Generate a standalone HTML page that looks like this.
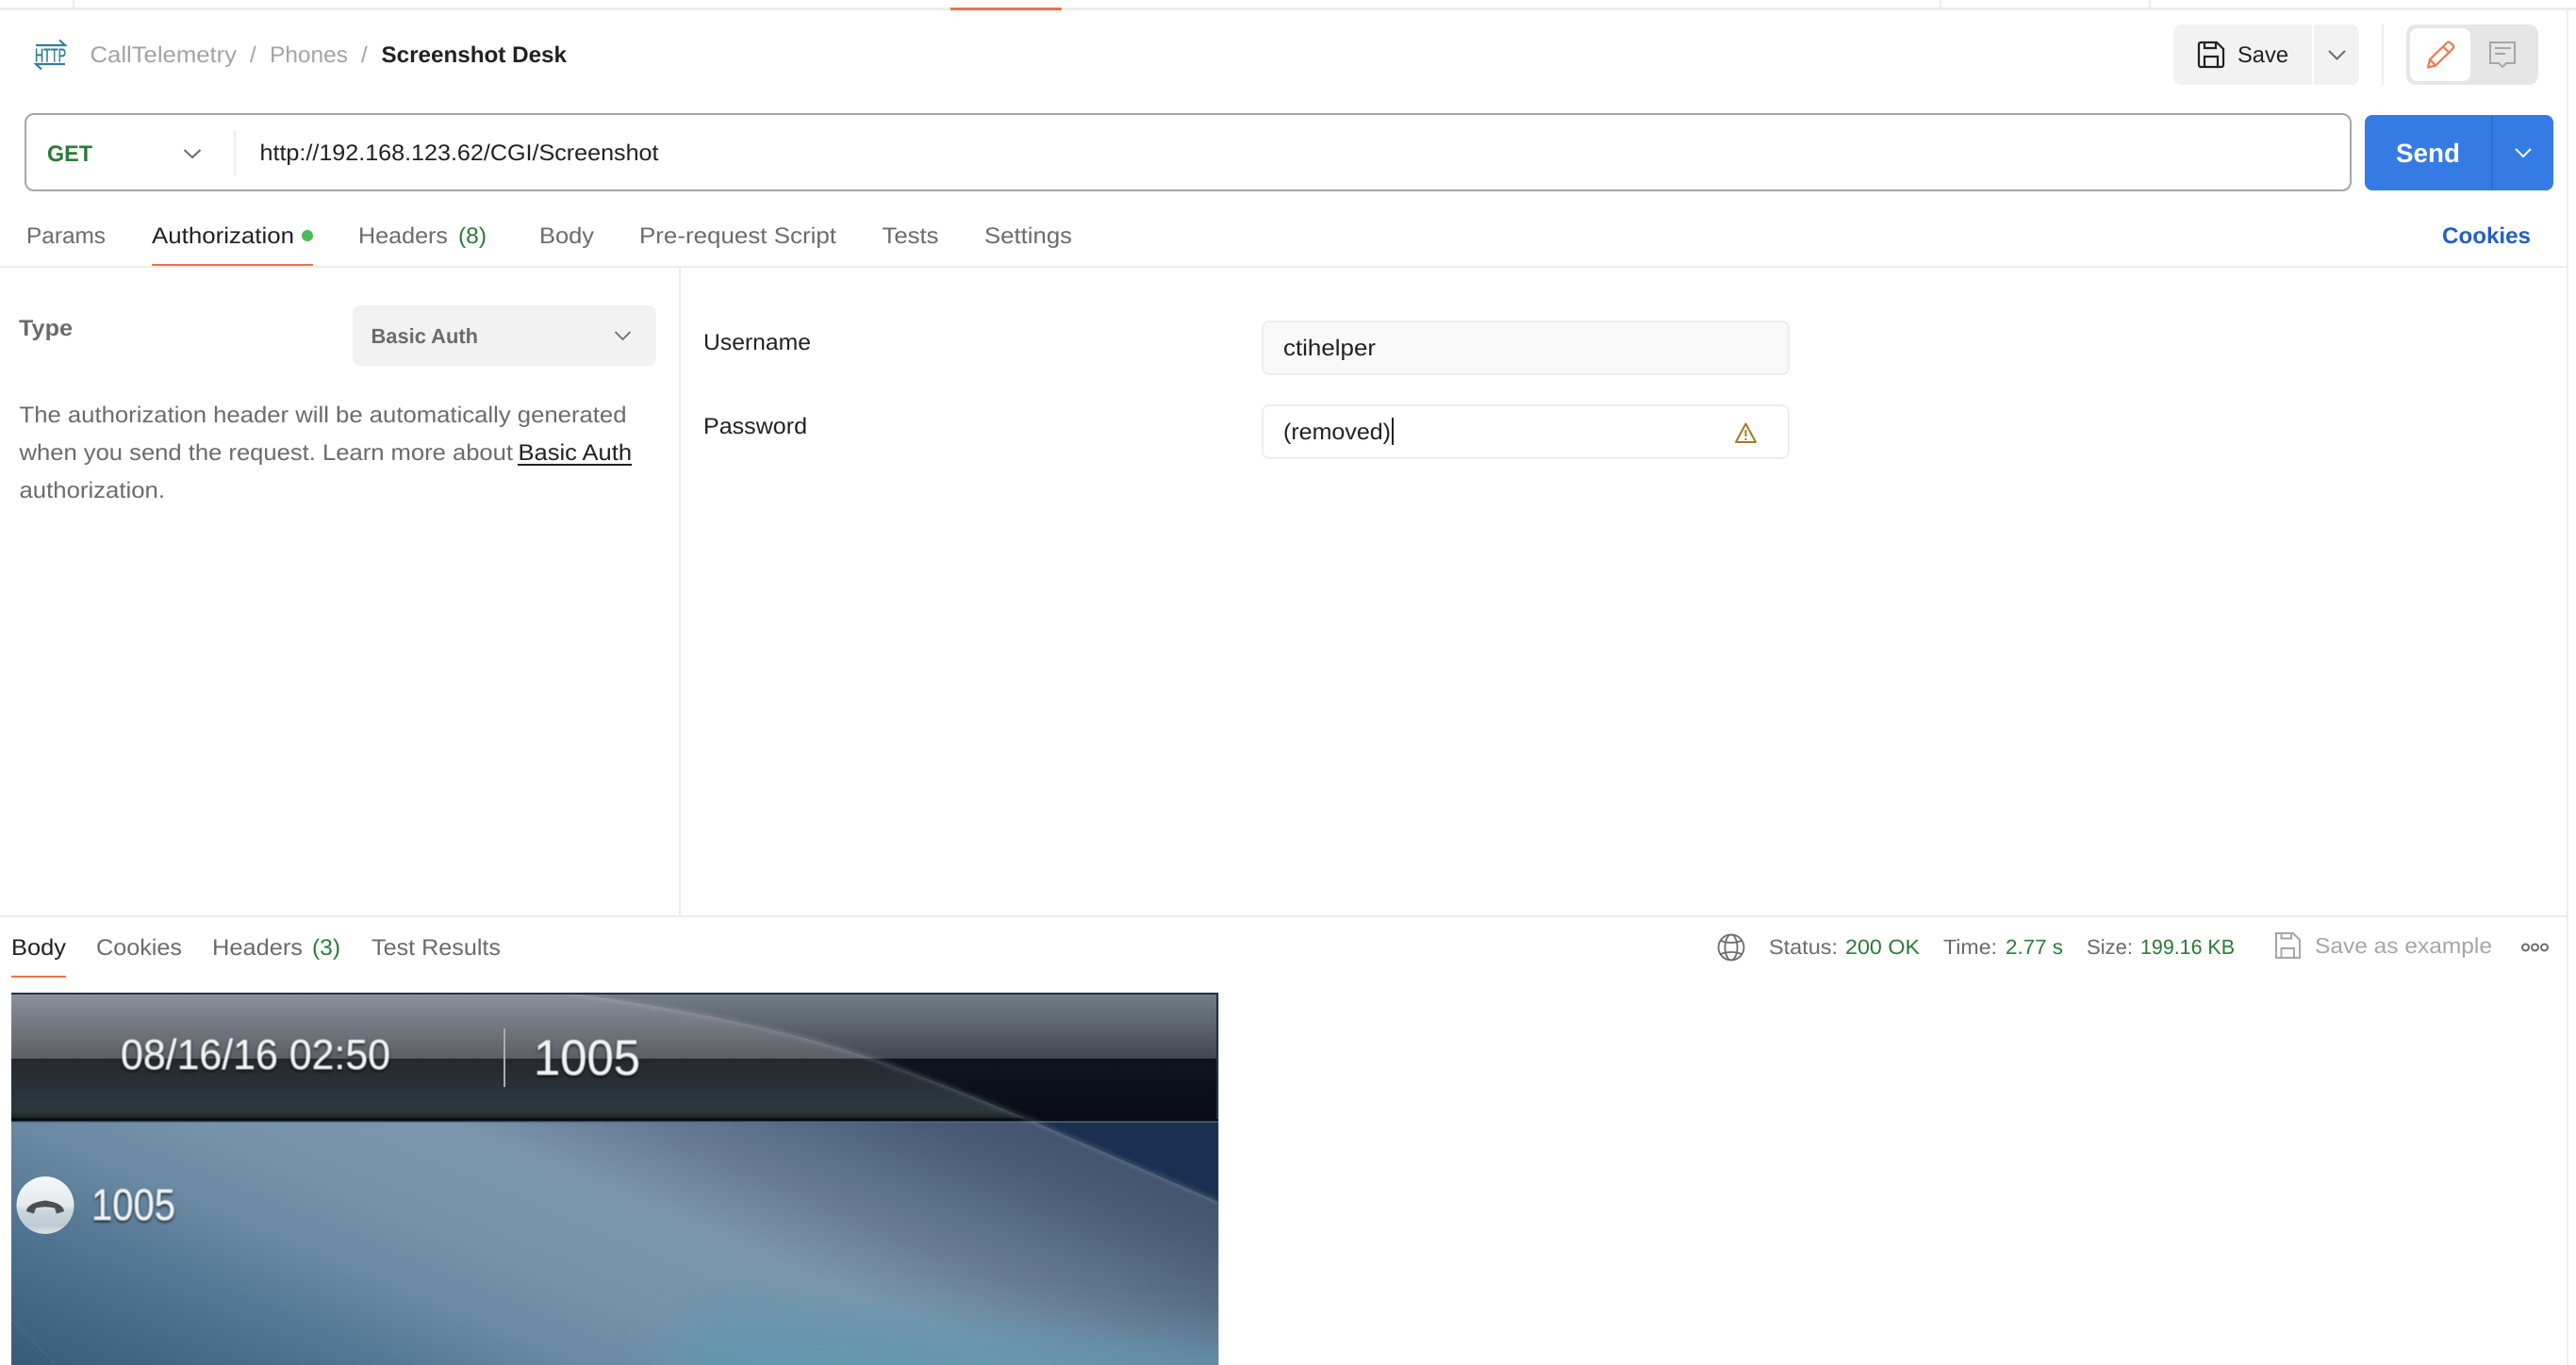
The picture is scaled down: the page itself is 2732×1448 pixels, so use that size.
<!DOCTYPE html>
<html lang="en"><head><meta charset="utf-8"><title>Screenshot Desk</title>
<style>
html,body{margin:0;padding:0;background:#fff;width:2732px;height:1448px;overflow:hidden}
svg{display:block}
text{font-family:"Liberation Sans",Arial,sans-serif;font-size:24px;fill:#6b6b6b;text-rendering:geometricPrecision}
.d{fill:#212121}.g{fill:#2b7a38}.l{fill:#a6a6a6}.b{font-weight:700}
.s{font-size:22px}
.ph{fill:#f2f3f4;filter:url(#ts)}
</style></head><body>
<svg width="2732" height="1448" viewBox="0 0 2732 1448" xmlns="http://www.w3.org/2000/svg">
<defs>
<filter id="ts" x="-10%" y="-30%" width="120%" height="160%"><feGaussianBlur in="SourceGraphic" stdDeviation=".5" result="t"/><feDropShadow in="t" dx="0" dy="2" stdDeviation="1.6" flood-color="#000" flood-opacity=".8"/></filter>
<filter id="b30" x="-30%" y="-80%" width="160%" height="260%"><feGaussianBlur stdDeviation="26"/></filter>
<filter id="b1" x="-5%" y="-5%" width="110%" height="110%"><feGaussianBlur stdDeviation="2"/></filter>
<clipPath id="ci"><rect x="12" y="1053" width="1280" height="395"/></clipPath>
<clipPath id="cr"><path d="M12 1053H600Q800 1080 925 1123Q1010 1153 1099 1191L1292 1275V1448H12Z"/></clipPath>
<linearGradient id="tr" x1="0" y1="0" x2="0" y2="1"><stop offset="0" stop-color="#737b85"/><stop offset=".5" stop-color="#5b636c"/><stop offset="1" stop-color="#42464f"/></linearGradient>
<linearGradient id="tl" x1="0" y1="0" x2="0" y2="1"><stop offset="0" stop-color="#8b9099"/><stop offset=".5" stop-color="#73777f"/><stop offset="1" stop-color="#5c5f66"/></linearGradient>
<linearGradient id="dl" x1="0" y1="0" x2="0" y2="1"><stop offset="0" stop-color="#24292f"/><stop offset=".85" stop-color="#2d383e"/><stop offset="1" stop-color="#1e2428"/></linearGradient>
<linearGradient id="dr" x1="0" y1="0" x2="0" y2="1"><stop offset="0" stop-color="#0c1520"/><stop offset="1" stop-color="#090d15"/></linearGradient>
<linearGradient id="mg" gradientUnits="userSpaceOnUse" x1="12" y1="1455" x2="280" y2="818">
<stop offset="0" stop-color="#365a76"/><stop offset=".2" stop-color="#4d7390"/><stop offset=".35" stop-color="#6a89a2"/><stop offset=".47" stop-color="#7593aa"/><stop offset=".61" stop-color="#7b96ac"/><stop offset=".72" stop-color="#687d95"/><stop offset=".82" stop-color="#556a84"/><stop offset=".89" stop-color="#4a5b78"/><stop offset="1" stop-color="#3f4f6c"/></linearGradient>
<linearGradient id="ci2" x1="0" y1="0" x2="0" y2="1"><stop offset="0" stop-color="#f5f7f8"/><stop offset=".5" stop-color="#e6eaec"/><stop offset=".58" stop-color="#cdd9de"/><stop offset=".85" stop-color="#bccbd2"/><stop offset="1" stop-color="#dde4e7"/></linearGradient>
</defs>
<rect width="2732" height="1448" fill="#fff"/>

<!-- top strip -->
<rect x="0" y="8" width="2732" height="3" fill="#ededed"/>
<rect x="77" y="0" width="2" height="8" fill="#ededed"/>
<rect x="2057" y="0" width="2" height="8" fill="#ededed"/>
<rect x="2279" y="0" width="2" height="8" fill="#ededed"/>
<rect x="1008" y="8" width="118" height="3" fill="#ef7047"/>
<rect x="2722" y="10" width="2" height="1438" fill="#ededed"/>

<!-- breadcrumb -->
<g fill="none" stroke="#2f7f92" stroke-width="2.200">
<path d="M38 48H69L63 42.500"/><path d="M69 68H38L44 73.500"/>
</g>
<text x="37" y="65.500" textLength="33" lengthAdjust="spacingAndGlyphs" style="font-size:20px;fill:#2f7f92;stroke:#2f7f92;stroke-width:.5">HTTP</text>
<text x="95.500" y="66" textLength="155.500" lengthAdjust="spacingAndGlyphs" style="fill:#a3a3a3">CallTelemetry</text>
<text x="265" y="66" style="fill:#a3a3a3">/</text>
<text x="286" y="66" textLength="83" lengthAdjust="spacingAndGlyphs" style="fill:#a3a3a3">Phones</text>
<text x="383" y="66" style="fill:#a3a3a3">/</text>
<text x="404.500" y="66" textLength="196.500" lengthAdjust="spacingAndGlyphs" class="d b">Screenshot Desk</text>

<!-- save group -->
<path d="M2313 26H2452V90H2313a8 8 0 0 1-8-8V34a8 8 0 0 1 8-8Z" fill="#f2f2f2"/>
<path d="M2454 26H2494a8 8 0 0 1 8 8V82a8 8 0 0 1-8 8H2454Z" fill="#f2f2f2"/>
<g fill="none" stroke="#212121" stroke-width="2.200">
<path d="M2334 45H2351L2358 52V69a2 2 0 0 1-2 2H2334a2 2 0 0 1-2-2V47a2 2 0 0 1 2-2Z"/>
<path d="M2338 71V60H2352V71"/><path d="M2338 45V51H2350V45"/>
</g>
<text x="2373" y="66" textLength="54" lengthAdjust="spacingAndGlyphs" class="d">Save</text>
<path d="M2470 54L2478.500 62.500L2487 54" fill="none" stroke="#6b6b6b" stroke-width="2"/>
<rect x="2526" y="26" width="2" height="64" fill="#ededed"/>
<rect x="2552" y="26" width="140" height="64" rx="10" fill="#e6e6e6"/>
<rect x="2556" y="30" width="64" height="56" rx="8" fill="#fff"/>
<g fill="none" stroke="#f0774a" stroke-width="2.200" stroke-linejoin="round">
<path d="M2575 71.500L2577 63L2595 45.500Q2597 43.500 2599 45.500L2601.500 48Q2603 50 2601 52L2583 69.500Z"/>
<path d="M2591 49.500L2598 56.500"/><path d="M2577 63L2583 69.500"/>
</g>
<g fill="none" stroke="#a6a6a6" stroke-width="2">
<path d="M2641 45H2667V67H2658L2654 71L2650 67H2641Z"/><path d="M2646 51H2663"/><path d="M2646 57H2657"/>
</g>

<!-- url bar -->
<rect x="27" y="121" width="2466" height="81" rx="9" fill="#fff" stroke="#a6a6a6" stroke-width="2"/>
<text x="50" y="171" textLength="48" lengthAdjust="spacingAndGlyphs" class="g b">GET</text>
<path d="M195.500 159L204 167L212.500 159" fill="none" stroke="#6b6b6b" stroke-width="2"/>
<rect x="248" y="138" width="2" height="48" fill="#ededed"/>
<text x="275.500" y="170" textLength="423" lengthAdjust="spacingAndGlyphs" class="d">http://192.168.123.62/CGI/Screenshot</text>
<path d="M2516 122H2642V202H2516a8 8 0 0 1-8-8V130a8 8 0 0 1 8-8Z" fill="#347be3"/>
<path d="M2644 122H2700a8 8 0 0 1 8 8V194a8 8 0 0 1-8 8H2644Z" fill="#347be3"/>
<rect x="2642" y="122" width="2" height="80" fill="#2e6fd0"/>
<text x="2541" y="172" textLength="68" lengthAdjust="spacingAndGlyphs" class="b" style="font-size:28px;fill:#fff">Send</text>
<path d="M2668 158L2676 166L2684 158" fill="none" stroke="#fff" stroke-width="2"/>

<!-- tabs -->
<text x="28" y="258" textLength="84" lengthAdjust="spacingAndGlyphs">Params</text>
<text x="161" y="258" textLength="151" lengthAdjust="spacingAndGlyphs" class="d">Authorization</text>
<circle cx="326" cy="250" r="6" fill="#4dba5c"/>
<text x="380" y="258" textLength="95" lengthAdjust="spacingAndGlyphs">Headers</text>
<text x="486" y="258" textLength="30" lengthAdjust="spacingAndGlyphs" class="g">(8)</text>
<text x="572" y="258" textLength="58" lengthAdjust="spacingAndGlyphs">Body</text>
<text x="678" y="258" textLength="209" lengthAdjust="spacingAndGlyphs">Pre-request Script</text>
<text x="935.500" y="258" textLength="60" lengthAdjust="spacingAndGlyphs">Tests</text>
<text x="1044" y="258" textLength="93" lengthAdjust="spacingAndGlyphs">Settings</text>
<text x="2590" y="258" textLength="94" lengthAdjust="spacingAndGlyphs" class="b" style="fill:#2160c4">Cookies</text>
<rect x="0" y="282" width="2722" height="2" fill="#ededed"/>
<rect x="161" y="280" width="171" height="2" fill="#ef7047"/>
<rect x="720" y="284" width="2" height="687" fill="#ededed"/>

<!-- auth left -->
<text x="20" y="356" textLength="57" lengthAdjust="spacingAndGlyphs" class="b">Type</text>
<rect x="374" y="324" width="322" height="64" rx="8" fill="#f2f2f2"/>
<text x="393.500" y="364" textLength="113.500" lengthAdjust="spacingAndGlyphs" class="b s">Basic Auth</text>
<path d="M652.500 352L660.500 360L668.500 352" fill="none" stroke="#6b6b6b" stroke-width="1.800"/>
<text x="20.500" y="448" textLength="644" lengthAdjust="spacingAndGlyphs">The authorization header will be automatically generated</text>
<text x="20.500" y="488" textLength="523.500" lengthAdjust="spacingAndGlyphs">when you send the request. Learn more about</text>
<text x="549.500" y="488" textLength="120.500" lengthAdjust="spacingAndGlyphs" class="d">Basic Auth</text>
<rect x="549" y="492" width="121" height="2" fill="#212121"/>
<text x="20.500" y="528" textLength="154.500" lengthAdjust="spacingAndGlyphs">authorization.</text>

<!-- auth right -->
<text x="746" y="371" textLength="114" lengthAdjust="spacingAndGlyphs" class="d">Username</text>
<text x="746" y="460" textLength="110" lengthAdjust="spacingAndGlyphs" class="d">Password</text>
<rect x="1339" y="341" width="558" height="56" rx="7" fill="#f9f9f9" stroke="#ededed" stroke-width="2"/>
<text x="1361" y="377" textLength="98" lengthAdjust="spacingAndGlyphs" class="d">ctihelper</text>
<rect x="1339" y="430" width="558" height="56" rx="7" fill="#fff" stroke="#ededed" stroke-width="2"/>
<text x="1361" y="466" textLength="114" lengthAdjust="spacingAndGlyphs" class="d">(removed)</text>
<rect x="1476" y="443" width="2" height="29" fill="#212121"/>
<g fill="none" stroke="#a9781f" stroke-width="2" stroke-linejoin="round">
<path d="M1851.500 449.500L1862 469H1841Z"/><path d="M1851.500 456V463"/><path d="M1851.500 465V467"/>
</g>

<!-- response -->
<rect x="0" y="971" width="2722" height="2" fill="#ededed"/>
<text x="12" y="1013" textLength="58" lengthAdjust="spacingAndGlyphs" class="d">Body</text>
<text x="102" y="1013" textLength="91" lengthAdjust="spacingAndGlyphs">Cookies</text>
<text x="225" y="1013" textLength="96" lengthAdjust="spacingAndGlyphs">Headers</text>
<text x="331" y="1013" textLength="30" lengthAdjust="spacingAndGlyphs" class="g">(3)</text>
<text x="394" y="1013" textLength="137" lengthAdjust="spacingAndGlyphs">Test Results</text>
<rect x="12" y="1035" width="58" height="2" fill="#ef7047"/>

<g fill="none" stroke="#6b6b6b" stroke-width="1.800">
<circle cx="1836" cy="1005" r="13.500"/><ellipse cx="1836" cy="1005" rx="6.500" ry="13.500"/>
<path d="M1825 998Q1836 1002 1847 998"/><path d="M1825 1012Q1836 1008 1847 1012"/>
</g>
<text x="1876" y="1012" textLength="73" lengthAdjust="spacingAndGlyphs" class="s">Status:</text>
<text x="1957" y="1012" textLength="79" lengthAdjust="spacingAndGlyphs" class="g s">200 OK</text>
<text x="2061" y="1012" textLength="57" lengthAdjust="spacingAndGlyphs" class="s">Time:</text>
<text x="2127" y="1012" textLength="61" lengthAdjust="spacingAndGlyphs" class="g s">2.77 s</text>
<text x="2213" y="1012" textLength="49" lengthAdjust="spacingAndGlyphs" class="s">Size:</text>
<text x="2270" y="1012" textLength="100" lengthAdjust="spacingAndGlyphs" class="g s">199.16 KB</text>
<g fill="none" stroke="#a6a6a6" stroke-width="2">
<path d="M2414 990H2432L2439 997V1016H2414Z"/><path d="M2419.500 1016V1006H2433V1016"/><path d="M2419.500 990V995.500H2430V990"/>
</g>
<text x="2455" y="1011" textLength="188" lengthAdjust="spacingAndGlyphs" class="l" style="font-size:23px">Save as example</text>
<g fill="none" stroke="#6b6b6b" stroke-width="2">
<circle cx="2678.500" cy="1005" r="3.500"/><circle cx="2688.500" cy="1005" r="3.500"/><circle cx="2698.500" cy="1005" r="3.500"/>
</g>

<!-- phone screenshot -->
<g clip-path="url(#ci)">
<rect x="12" y="1053" width="1280" height="395" fill="#1b3050"/>
<rect x="12" y="1055" width="1280" height="68" fill="url(#tr)"/>
<rect x="12" y="1123" width="1280" height="64" fill="url(#dr)"/>
<g clip-path="url(#cr)">
<rect x="12" y="1190" width="1280" height="258" fill="url(#mg)"/>
<path d="M760 1385L1340 1430V1520H640Z" fill="#5f98af" opacity=".7" filter="url(#b30)"/>
<rect x="12" y="1055" width="1280" height="68" fill="url(#tl)"/>
<rect x="12" y="1123" width="1280" height="64" fill="url(#dl)"/>
</g>
<rect x="12" y="1186" width="1280" height="3" fill="#0a0d10"/>
<rect x="12" y="1189.500" width="1280" height="1.500" fill="#56697c" opacity=".8"/>
<path d="M600 1053Q800 1080 925 1123Q1010 1153 1099 1191L1292 1275" fill="none" stroke="#c9d3dc" stroke-opacity=".2" stroke-width="4" filter="url(#b1)"/>
<rect x="12" y="1053" width="1280" height="2" fill="#26323f"/>
<rect x="1290" y="1055" width="2" height="132" fill="#26323f"/>
<path d="M12 1400L60 1448" stroke="#7d99ad" stroke-opacity=".12" stroke-width="2" fill="none"/>
</g>
<rect x="1292" y="1053" width="1" height="395" fill="#c6d0dc"/>
<text x="128" y="1134" textLength="286" lengthAdjust="spacingAndGlyphs" class="ph" style="font-size:45px">08/16/16 02:50</text>
<rect x="534" y="1091" width="2" height="62" fill="#a9adb1"/>
<text x="566" y="1140" textLength="113" lengthAdjust="spacingAndGlyphs" class="ph" style="font-size:53px">1005</text>
<circle cx="48" cy="1278.500" r="30.500" fill="url(#ci2)"/>
<path d="M28 1285Q29 1276 48 1273.500Q67 1276 68 1285L60 1287.500L58 1281.500Q48 1279 38 1281.500L36 1287.500Z" fill="#4b5053"/>
<text x="97" y="1294" textLength="89" lengthAdjust="spacingAndGlyphs" class="ph" style="font-size:47px">1005</text>
</svg>
</body></html>
